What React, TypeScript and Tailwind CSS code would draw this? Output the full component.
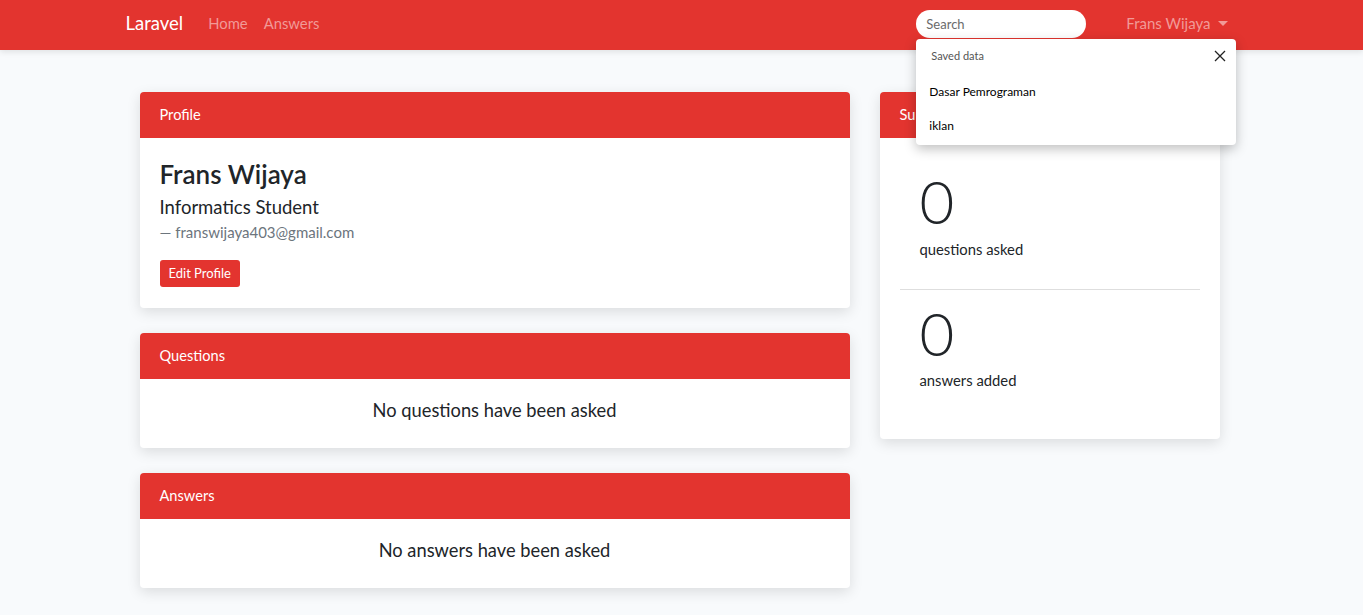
import React from "react";

const Card: React.FC<{ title: string; children: React.ReactNode; className?: string }> = ({
  title,
  children,
  className,
}) => {
  return (
    <div className={"bg-white rounded-[4px] shadow-[0_4px_14px_rgba(0,0,0,0.12)] overflow-hidden " + (className ?? "")}>
      <div className="bg-[#e3342f] h-[46px] flex items-center px-5 text-white text-[14.6px]">{title}</div>
      {children}
    </div>
  );
};

const App: React.FC = () => {
  return (
    <div className="min-h-[615px] bg-[#f8fafc] text-[#212529] font-['Lato','Noto_Sans',sans-serif] text-[14.8px]">
      <nav className="bg-[#e3342f] h-[50px] shadow-[0_2px_6px_rgba(0,0,0,0.1)] relative z-10">
        <div className="w-[1140px] mx-auto pl-[14px] pr-[24px] h-full flex items-center pb-[3px]">
          <span className="text-white text-[18.5px] mr-[25px]">Laravel</span>
          <a className="text-[#f19a97] text-[14.8px] mr-[16px]">Home</a>
          <a className="text-[#f19a97] text-[14.8px]">Answers</a>
          <div className="ml-auto relative mr-[40px]">
            <input
              placeholder="Search"
              className="w-[170px] h-[28px] rounded-full bg-white pl-[9px] text-[13px] placeholder:text-[#6b6b6b] outline-none border-l-[1px] border-transparent"
            />
            <div className="absolute left-0 top-[29px] w-[320px] h-[106px] bg-white rounded-[4px] shadow-[0_4px_12px_rgba(0,0,0,0.25)] text-black">
              <div className="flex items-center justify-between pl-[15px] pr-[10px] pt-[9px]">
                <span className="text-[11px] text-[#555]">Saved data</span>
                <svg width="12" height="12" viewBox="0 0 12 12" stroke="#222" strokeWidth="1.3">
                  <path d="M1 1L11 11M11 1L1 11" />
                </svg>
              </div>
              <div className="pl-[13px] text-[12px] mt-[19px]">Dasar Pemrograman</div>
              <div className="pl-[13px] text-[12px] mt-[16px]">iklan</div>
            </div>
          </div>
          <span className="text-[#f19a97] text-[15px] flex items-center gap-[7px]">
            Frans Wijaya
            <span className="w-0 h-0 border-l-[5px] border-r-[5px] border-t-[5px] border-l-transparent border-r-transparent border-t-[#f19a97]" />
          </span>
        </div>
      </nav>

      <main className="w-[1140px] mx-auto pl-[28px] pt-[42px] pb-6 flex gap-[30px] items-start">
        <div className="w-[710px] flex flex-col gap-[25px]">
          <Card title="Profile">
            <div className="px-5 pt-[22px] pb-[21px]">
              <div className="text-[26px] font-semibold leading-[29px]">Frans Wijaya</div>
              <div className="text-[18.5px] leading-[22px] mt-[7px]">Informatics Student</div>
              <div className="text-[#6c757d] text-[15px] leading-[22px] mt-[3px]">— franswijaya403@gmail.com</div>
              <button className="mt-[17px] bg-[#e3342f] text-white text-[13px] h-[27px] px-[9px] rounded-[3px]">
                Edit Profile
              </button>
            </div>
          </Card>
          <Card title="Questions">
            <div className="pt-5 pb-[27px] text-center text-[18.3px] leading-[22px]">No questions have been asked</div>
          </Card>
          <Card title="Answers">
            <div className="pt-5 pb-[27px] text-center text-[18.3px] leading-[22px]">No answers have been asked</div>
          </Card>
        </div>

        <Card title="Summary" className="w-[340px]">
          <div className="px-5 pt-[30px] pb-[48px]">
            <div className="px-5">
              <div className="text-[60px] font-light leading-[66px]">0</div>
              <div className="leading-[22px] mt-[4px]">questions asked</div>
            </div>
            <hr className="border-t border-[#dedede] mt-[29px] mb-[10px]" />
            <div className="px-5">
              <div className="text-[60px] font-light leading-[66px]">0</div>
              <div className="leading-[22px] mt-[3px]">answers added</div>
            </div>
          </div>
        </Card>
      </main>
    </div>
  );
};

export default App;
